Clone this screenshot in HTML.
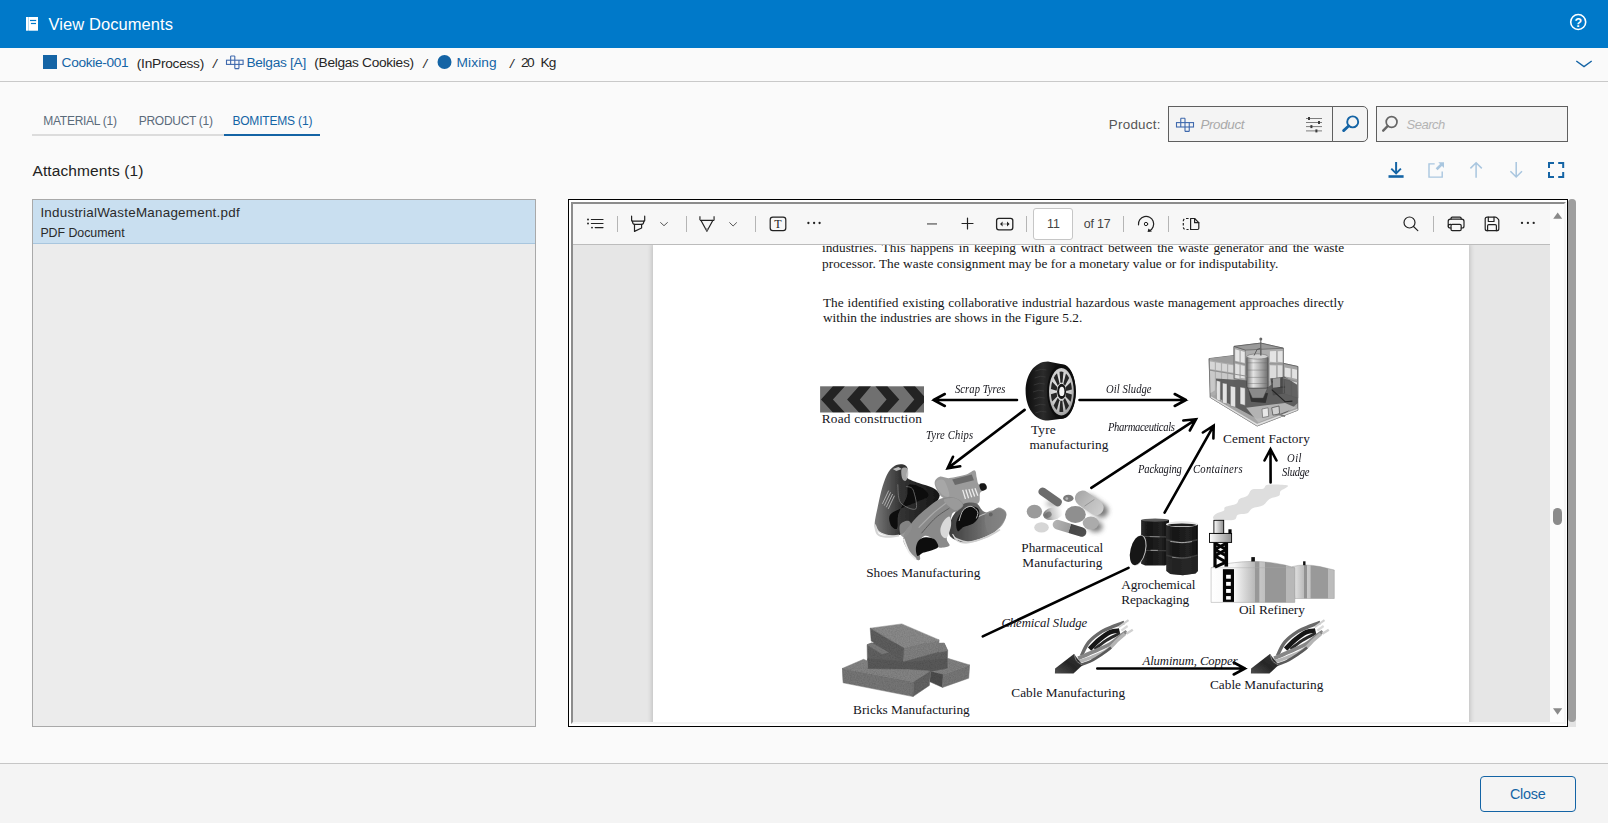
<!DOCTYPE html>
<html lang="en">
<head>
<meta charset="utf-8">
<title>View Documents</title>
<style>
*{box-sizing:border-box;margin:0;padding:0}
html,body{width:1608px;height:823px;overflow:hidden}
body{background:#fafafa;font-family:"Liberation Sans",sans-serif;color:#333;position:relative}
.a{position:absolute}
.t{position:absolute;white-space:nowrap;line-height:1}
.lnk{color:#1464a5}
svg{position:absolute;overflow:visible}
/* header */
#hdr{left:0;top:0;width:1608px;height:48px;background:#0079c9}
#crumb{left:0;top:48px;width:1608px;height:34px;background:#fafafa;border-bottom:1px solid #c9c9c9}
#foot{left:0;top:763px;width:1608px;height:60px;background:#f4f4f4;border-top:1px solid #c6c6c6}
#closeb{left:1480px;top:776px;width:96px;height:36px;border:1px solid #1464a5;border-radius:4px}
/* tabs */
#tabline{left:32px;top:134px;width:192px;height:2px;background:#dcdcdc}
#tabsel{left:224px;top:134px;width:96px;height:2px;background:#1464a5}
/* inputs */
#pin{left:1168px;top:106px;width:165px;height:36px;background:#f4f4f4;border:1px solid #5f5f5f}
#pbtn{left:1332px;top:106px;width:36px;height:36px;background:#f4f4f4;border:1px solid #5f5f5f;border-radius:0 5px 5px 0}
#sin{left:1376px;top:106px;width:192px;height:36px;background:#f4f4f4;border:1px solid #5f5f5f}
/* left list */
#list{left:32px;top:199px;width:504px;height:528px;background:#ececec;border:1px solid #a9a9a9}
#item{left:33px;top:200px;width:502px;height:44px;background:#c9dff0;border-bottom:1px solid #a8c6de}
/* pdf frame */
#pdf{left:568px;top:199px;width:1000px;height:528px;background:#fff;border:1px solid #000}
#pdfin{left:571px;top:202px;width:995px;height:522px;border-style:solid;border-width:2px;border-color:#8c8c8c #f4f4f4 #f4f4f4 #8c8c8c;background:#e6e6e6;overflow:hidden}
#page{left:653px;top:245px;width:816px;height:480px;background:#fff;box-shadow:0 0 5px 1px rgba(0,0,0,.18)}
#ptb{left:573px;top:204px;width:977px;height:41px;background:#f7f7f7;border-bottom:1px solid #bcbcbc}
#psb{left:1550px;top:204px;width:16px;height:520px;background:#fcfcfc}
#psbt{left:1553px;top:508px;width:9px;height:17px;border-radius:4.5px;background:#8b8b8b}
.sep{position:absolute;top:216px;width:1px;height:16px;background:#b5b5b5}
#pgin{left:1033px;top:208px;width:40px;height:32px;background:#fff;border:1px solid #c6c6c6;border-radius:3px}
#osb{left:1568px;top:199px;width:8px;height:528px;background:#e3e3e3;border-radius:4px 4px 0 0}
#osbt{left:1568px;top:199px;width:8px;height:523px;background:#9e9e9e;border-radius:4px}
</style>
</head>
<body>
<!-- HEADER -->
<header id="hdr" class="a"></header>
<nav id="crumb" class="a"></nav>
<footer id="foot" class="a"></footer>
<div id="closeb" class="a"></div>
<div id="tabline" class="a"></div>
<div id="tabsel" class="a"></div>
<div id="pin" class="a"></div>
<div id="pbtn" class="a"></div>
<div id="sin" class="a"></div>
<section id="list" class="a"></section>
<div id="item" class="a"></div>
<div id="osb" class="a"></div>
<div id="osbt" class="a"></div>
<section id="pdf" class="a"></section>
<div id="pdfin" class="a">
<div id="pg" class="a" style="left:-573px;top:-204px;width:1608px;height:823px">
<div id="page" class="a"></div>
<svg class="a" style="left:0;top:0" width="1608" height="823" viewBox="0 0 1608 823">
<defs>
<filter id="b1" x="-20%" y="-20%" width="140%" height="140%"><feGaussianBlur stdDeviation="0.6"/></filter>
<filter id="b2" x="-20%" y="-20%" width="140%" height="140%"><feGaussianBlur stdDeviation="1.2"/></filter>
<filter id="b3" x="-30%" y="-30%" width="160%" height="160%"><feGaussianBlur stdDeviation="2.5"/></filter>
<filter id="noise" x="0" y="0" width="100%" height="100%"><feTurbulence type="fractalNoise" baseFrequency="0.85" numOctaves="2" seed="3" result="n"/><feColorMatrix in="n" type="matrix" values="0 0 0 0 0.72  0 0 0 0 0.72  0 0 0 0 0.72  1.5 0 0 0 -0.45" result="g"/><feComposite in="g" in2="SourceGraphic" operator="in" result="gm"/><feBlend in="SourceGraphic" in2="gm" mode="multiply" result="m"/><feGaussianBlur in="m" stdDeviation="0.35"/></filter>
</defs>

<g id="arrows">
<path d="M1017.0 400.0L933.5 400.0M944.8 406.0L933.5 400.0L944.8 394.0" fill="none" stroke="#000" stroke-width="2.6" stroke-linecap="round" stroke-linejoin="miter"/>
<path d="M1024.6 409.9L947.6 468.4M960.2 466.3L947.6 468.4L953.0 456.8" fill="none" stroke="#000" stroke-width="2.6" stroke-linecap="round" stroke-linejoin="miter"/>
<path d="M1079.5 400.0L1186.0 400.0M1174.7 394.0L1186.0 400.0L1174.7 406.0" fill="none" stroke="#000" stroke-width="2.6" stroke-linecap="round" stroke-linejoin="miter"/>
<path d="M1091.3 487.8L1196.0 419.3M1183.3 420.5L1196.0 419.3L1189.8 430.5" fill="none" stroke="#000" stroke-width="2.6" stroke-linecap="round" stroke-linejoin="miter"/>
<path d="M1164.6 512.6L1213.7 425.6M1202.9 432.5L1213.7 425.6L1213.4 438.4" fill="none" stroke="#000" stroke-width="2.6" stroke-linecap="round" stroke-linejoin="miter"/>
<path d="M1270.6 482.5L1270.5 449.2M1264.5 460.5L1270.5 449.2L1276.5 460.5" fill="none" stroke="#000" stroke-width="2.6" stroke-linecap="round" stroke-linejoin="miter"/>
<path d="M1128.5 567.9L982.8 636.4" fill="none" stroke="#000" stroke-width="2.6" stroke-linecap="round" stroke-linejoin="miter"/>
<path d="M1097.3 668.5L1245.0 668.5M1233.7 662.5L1245.0 668.5L1233.7 674.5" fill="none" stroke="#000" stroke-width="2.6" stroke-linecap="round" stroke-linejoin="miter"/>
</g>
<g id="barrels" filter="url(#b1)">
<defs><linearGradient id="bg1" x1="0" x2="1"><stop offset="0" stop-color="#2e2e2e"/><stop offset=".25" stop-color="#141414"/><stop offset=".7" stop-color="#222"/><stop offset="1" stop-color="#0e0e0e"/></linearGradient></defs>
<path d="M1141.1 520.1L1169.0 520.1L1169.0 563.8L1165.0 565.6L1145.2 565.6L1141.1 563.8Z" fill="url(#bg1)" />
<ellipse cx="1155.1" cy="520.1" rx="13.9" ry="1.6" fill="#5a5a5a" />
<path d="M1141.6 536.3L1168.6 537.0" fill="none" stroke="#4d4d4d" stroke-width="1.0" />
<path d="M1149.7 536.6L1159.6 536.8" fill="none" stroke="#8a8a8a" stroke-width="0.9" />
<path d="M1141.6 550.3L1168.6 550.8" fill="none" stroke="#444" stroke-width="1.0" />
<path d="M1150.6 550.3L1157.8 550.4" fill="none" stroke="#a0a0a0" stroke-width="0.9" />
<path d="M1165.9 524.2L1197.9 524.2L1197.9 570.9L1195.5 573.6L1182.9 575.3L1170.4 574.1L1166.3 570.9Z" fill="url(#bg1)" />
<ellipse cx="1181.9" cy="524.2" rx="16.0" ry="2.9" fill="#e6e6e6" />
<ellipse cx="1181.9" cy="524.9" rx="14.2" ry="1.4" fill="#1a1a1a" />
<path d="M1166.3 539.7C1168.9 540.1 1176.6 542.6 1181.9 542.6C1187.1 542.6 1195.2 540.1 1197.9 539.7" fill="none" stroke="#3b3b3b" stroke-width="1.6" />
<path d="M1170.4 541.5C1172.3 541.6 1178.3 542.6 1181.9 542.6C1185.5 542.7 1190.3 541.8 1191.9 541.6" fill="none" stroke="#b5b5b5" stroke-width="0.9" />
<path d="M1166.3 555.2C1168.9 555.7 1176.6 558.2 1181.9 558.2C1187.1 558.2 1195.2 555.7 1197.9 555.2" fill="none" stroke="#3b3b3b" stroke-width="1.6" />
<path d="M1172.2 557.3C1173.8 557.4 1178.7 558.2 1181.9 558.2C1185.0 558.2 1189.5 557.4 1191.0 557.3" fill="none" stroke="#9a9a9a" stroke-width="0.8" />
<path d="M1166.8 558.4L1197.9 556.6L1197.9 570.9L1195.5 573.6L1182.9 575.3L1170.4 574.1L1166.6 570.9Z" fill="#2b2b2b" opacity="0.6" />
<ellipse cx="1138.3" cy="550.3" rx="7.6" ry="15.5" fill="#c4c4c4" transform="rotate(14 1138.3 550.3)" />
<ellipse cx="1137.7" cy="550.4" rx="7.2" ry="15.1" fill="#171717" transform="rotate(14 1137.7 550.4)" />
</g>
<g id="bricks" filter="url(#noise)">
<path d="M947.7 658.3L969.7 665.0L943.1 674.6L930.4 670.6L947.2 668.0Z" fill="#808080" stroke="#808080" stroke-width="0.5" />
<path d="M930.4 670.9L943.1 674.6L942.6 687.4L929.9 681.8Z" fill="#4c4c4c" stroke="#4c4c4c" stroke-width="0.5" />
<path d="M943.1 674.6L969.7 665.0L968.7 678.2L942.6 687.4Z" fill="#767676" stroke="#767676" stroke-width="0.5" />
<path d="M867.1 644.7L871.7 643.0L944.2 643.3L947.7 650.7L947.2 668.0L930.4 671.3L909.5 670.3L867.6 669.0Z" fill="#606060" stroke="#606060" stroke-width="0.5" />
<path d="M867.1 644.7L871.7 643.0L889.0 652.2L881.9 653.9Z" fill="#7a7a7a" stroke="#7a7a7a" stroke-width="0.5" />
<path d="M938.5 643.5L944.2 643.1L947.7 650.7L939.1 652.2Z" fill="#7e7e7e" stroke="#7e7e7e" stroke-width="0.5" />
<path d="M867.6 658.8L909.5 661.9L947.2 658.8L947.2 668.0L930.4 671.3L909.5 670.3L867.6 669.0Z" fill="#595959" stroke="#595959" stroke-width="0.5" />
<path d="M842.1 668.5L863.5 659.3L867.6 660.9L867.6 669.0L909.5 669.6L930.4 671.1L913.5 681.8Z" fill="#838383" stroke="#838383" stroke-width="0.5" />
<path d="M842.1 668.5L913.5 681.8L913.0 696.6L843.1 682.8Z" fill="#757575" stroke="#757575" stroke-width="0.5" />
<path d="M913.5 681.8L930.4 671.1L929.4 685.4L913.0 696.6Z" fill="#626262" stroke="#626262" stroke-width="0.5" />
<path d="M870.2 628.2L901.8 623.9L939.1 639.9L904.3 648.6Z" fill="#898989" stroke="#898989" stroke-width="0.5" />
<path d="M870.2 628.2L904.3 648.6L903.3 661.4L871.2 641.0Z" fill="#5d5d5d" stroke="#5d5d5d" stroke-width="0.5" />
<path d="M904.3 648.6L939.1 639.9L938.5 651.7L903.3 661.4Z" fill="#7f7f7f" stroke="#7f7f7f" stroke-width="0.5" />
</g>
<g id="cable1" filter="url(#b1)">
<defs><linearGradient id="cbs" x1="0" y1="1" x2="1" y2="0"><stop offset="0" stop-color="#4e4e4e"/><stop offset=".5" stop-color="#262626"/><stop offset="1" stop-color="#3a3a3a"/></linearGradient></defs>
<path d="M1081.4 655.8C1082.6 653.5 1085.4 646.2 1088.8 642.2C1092.2 638.1 1097.6 634.2 1102.0 631.4C1106.4 628.7 1111.5 627.2 1115.2 625.6C1119.0 624.1 1122.8 622.9 1124.3 622.3" fill="none" stroke="#6a6a6a" stroke-width="3.4" />
<path d="M1089.6 649.2C1091.1 647.7 1095.3 642.9 1098.7 640.1C1102.2 637.3 1106.8 633.8 1110.3 632.2C1113.7 630.7 1117.9 630.9 1119.4 630.6" fill="none" stroke="#161616" stroke-width="4.6" />
<path d="M1094.6 649.2C1096.5 647.7 1102.3 643.0 1106.2 640.5C1110.0 638.0 1115.5 635.6 1117.7 634.3C1120.0 633.0 1119.4 632.9 1119.8 632.7" fill="none" stroke="#2a2a2a" stroke-width="3.0" />
<path d="M1078.1 658.3C1080.8 657.1 1089.2 653.7 1094.6 651.3C1100.0 648.8 1106.2 646.2 1110.3 643.8C1114.4 641.4 1116.6 638.9 1119.4 636.8C1122.1 634.7 1125.6 632.3 1126.8 631.4" fill="none" stroke="#868686" stroke-width="3.8" />
<path d="M1076.8 662.4C1079.2 661.6 1086.4 659.4 1091.3 657.5C1096.2 655.5 1101.7 653.7 1106.2 650.8C1110.6 648.0 1114.6 642.9 1117.7 640.1C1120.8 637.3 1123.6 634.9 1124.8 633.9" fill="none" stroke="#b4b4b4" stroke-width="3.4" />
<path d="M1079.7 665.3C1081.6 664.5 1087.4 662.7 1091.3 660.8C1095.1 658.8 1099.5 655.9 1102.9 653.7C1106.2 651.5 1109.7 648.6 1111.1 647.5" fill="none" stroke="#5a5a5a" stroke-width="2.6" />
<path d="M1118.6 627.3L1128.5 620.1" fill="none" stroke="#cfcfcf" stroke-width="2.0" />
<path d="M1121.4 630.6L1127.6 626.0" fill="none" stroke="#dadada" stroke-width="2.2" />
<path d="M1126.4 633.7L1132.8 629.8" fill="none" stroke="#d0d0d0" stroke-width="2.4" />
<path d="M1054.9 673.6L1055.1 668.4L1073.9 654.0L1082.6 664.9L1073.5 673.6Z" fill="url(#cbs)" />
<path d="M1074.3 654.1C1074.7 655.3 1075.1 659.0 1076.4 660.8C1077.7 662.6 1081.2 664.2 1082.2 664.9" fill="none" stroke="#8a8a8a" stroke-width="0.9" />
</g>
<g id="cable2" transform="translate(196 0)" filter="url(#b1)">

<path d="M1081.4 655.8C1082.6 653.5 1085.4 646.2 1088.8 642.2C1092.2 638.1 1097.6 634.2 1102.0 631.4C1106.4 628.7 1111.5 627.2 1115.2 625.6C1119.0 624.1 1122.8 622.9 1124.3 622.3" fill="none" stroke="#6a6a6a" stroke-width="3.4" />
<path d="M1089.6 649.2C1091.1 647.7 1095.3 642.9 1098.7 640.1C1102.2 637.3 1106.8 633.8 1110.3 632.2C1113.7 630.7 1117.9 630.9 1119.4 630.6" fill="none" stroke="#161616" stroke-width="4.6" />
<path d="M1094.6 649.2C1096.5 647.7 1102.3 643.0 1106.2 640.5C1110.0 638.0 1115.5 635.6 1117.7 634.3C1120.0 633.0 1119.4 632.9 1119.8 632.7" fill="none" stroke="#2a2a2a" stroke-width="3.0" />
<path d="M1078.1 658.3C1080.8 657.1 1089.2 653.7 1094.6 651.3C1100.0 648.8 1106.2 646.2 1110.3 643.8C1114.4 641.4 1116.6 638.9 1119.4 636.8C1122.1 634.7 1125.6 632.3 1126.8 631.4" fill="none" stroke="#868686" stroke-width="3.8" />
<path d="M1076.8 662.4C1079.2 661.6 1086.4 659.4 1091.3 657.5C1096.2 655.5 1101.7 653.7 1106.2 650.8C1110.6 648.0 1114.6 642.9 1117.7 640.1C1120.8 637.3 1123.6 634.9 1124.8 633.9" fill="none" stroke="#b4b4b4" stroke-width="3.4" />
<path d="M1079.7 665.3C1081.6 664.5 1087.4 662.7 1091.3 660.8C1095.1 658.8 1099.5 655.9 1102.9 653.7C1106.2 651.5 1109.7 648.6 1111.1 647.5" fill="none" stroke="#5a5a5a" stroke-width="2.6" />
<path d="M1118.6 627.3L1128.5 620.1" fill="none" stroke="#cfcfcf" stroke-width="2.0" />
<path d="M1121.4 630.6L1127.6 626.0" fill="none" stroke="#dadada" stroke-width="2.2" />
<path d="M1126.4 633.7L1132.8 629.8" fill="none" stroke="#d0d0d0" stroke-width="2.4" />
<path d="M1054.9 673.6L1055.1 668.4L1073.9 654.0L1082.6 664.9L1073.5 673.6Z" fill="url(#cbs)" />
<path d="M1074.3 654.1C1074.7 655.3 1075.1 659.0 1076.4 660.8C1077.7 662.6 1081.2 664.2 1082.2 664.9" fill="none" stroke="#8a8a8a" stroke-width="0.9" />
</g>
<g id="cement">
<defs><linearGradient id="cyl" x1="0" x2="1"><stop offset="0" stop-color="#777"/><stop offset=".3" stop-color="#e4e4e4"/><stop offset=".55" stop-color="#bdbdbd"/><stop offset="1" stop-color="#6c6c6c"/></linearGradient></defs>
<path d="M1209.1 358.6L1234.0 355.5L1234.0 346.4L1260.8 343.1L1283.3 348.2L1283.3 363.4L1297.8 366.5L1297.8 410.2L1257.1 426.0L1210.3 397.5Z" fill="#a6a6a6" stroke="#555" stroke-width="0.8" />
<path d="M1209.1 358.6L1234.0 355.5L1246.8 358.6L1246.8 366.5L1215.8 361.8Z" fill="#9d9d9d" />
<path d="M1209.5 360.4L1246.8 366.5L1246.8 387.1L1210.3 396.2Z" fill="#aeaeae" />
<path d="M1210.0 361.4L1214.8 362.2L1214.8 369.8L1210.0 369.0Z" fill="#d6d6d6" />
<path d="M1210.0 370.8L1214.8 371.6L1214.8 390.6L1210.0 393.2Z" fill="#c9c9c9" />
<path d="M1216.0 362.4L1220.9 363.2L1220.9 370.8L1216.0 370.0Z" fill="#d6d6d6" />
<path d="M1216.0 371.8L1220.9 372.6L1220.9 390.4L1216.0 393.0Z" fill="#c9c9c9" />
<path d="M1222.1 363.4L1227.0 364.2L1227.0 371.8L1222.1 371.0Z" fill="#d6d6d6" />
<path d="M1222.1 372.8L1227.0 373.6L1227.0 390.2L1222.1 392.8Z" fill="#c9c9c9" />
<path d="M1228.2 364.4L1233.4 365.3L1233.4 372.8L1228.2 372.0Z" fill="#d6d6d6" />
<path d="M1228.2 373.8L1233.4 374.7L1233.4 389.9L1228.2 392.6Z" fill="#c9c9c9" />
<path d="M1234.0 346.4L1245.6 350.1L1245.6 381.1L1234.0 378.6Z" fill="#a9a9a9" stroke="#555" stroke-width="0.6" />
<path d="M1245.6 350.1L1283.3 348.2L1283.3 381.1L1245.6 381.1Z" fill="#adadad" />
<path d="M1234.0 346.4L1260.8 343.1L1283.3 348.2L1245.6 350.1Z" fill="#9a9a9a" stroke="#555" stroke-width="0.6" />
<path d="M1235.2 349.2L1239.5 350.5L1239.5 361.8L1235.2 360.7Z" fill="#e6e6e6" />
<path d="M1235.2 363.7L1239.5 364.8L1239.5 378.6L1235.2 378.0Z" fill="#e0e0e0" />
<path d="M1240.7 350.8L1244.7 352.0L1244.7 363.1L1240.7 362.1Z" fill="#e6e6e6" />
<path d="M1240.7 365.1L1244.7 366.1L1244.7 378.6L1240.7 378.0Z" fill="#e0e0e0" />
<path d="M1269.9 351.3L1276.0 350.9L1276.0 362.2L1269.9 361.8Z" fill="#e4e4e4" />
<path d="M1269.9 365.2L1276.0 365.5L1276.0 378.6L1269.9 378.0Z" fill="#dcdcdc" />
<path d="M1277.8 351.3L1282.7 350.9L1282.7 362.2L1277.8 361.8Z" fill="#e4e4e4" />
<path d="M1277.8 365.2L1282.7 365.5L1282.7 378.6L1277.8 378.0Z" fill="#dcdcdc" />
<path d="M1283.3 363.4L1297.8 366.5L1297.8 398.1L1283.3 393.2Z" fill="#a4a4a4" stroke="#555" stroke-width="0.6" />
<path d="M1284.8 367.4L1290.6 368.5L1290.6 377.6L1284.8 376.5Z" fill="#e2e2e2" />
<path d="M1284.8 380.2L1290.6 381.3L1290.6 395.4L1284.8 393.7Z" fill="#dadada" />
<path d="M1292.1 368.8L1297.0 369.8L1297.0 378.9L1292.1 378.0Z" fill="#e2e2e2" />
<path d="M1292.1 381.6L1297.0 382.6L1297.0 397.3L1292.1 395.9Z" fill="#dadada" />
<path d="M1215.8 378.6L1246.8 380.4L1268.1 387.1L1283.9 376.2L1297.2 384.7L1297.8 402.9L1285.1 413.9L1257.1 418.7L1218.2 398.1Z" fill="#585858" opacity="0.92" filter="url(#b1)"/>
<path d="M1216.4 380.4L1220.4 381.4L1220.4 401.1L1216.4 399.9Z" fill="#e2e2e2" stroke="#555" stroke-width="0.4" />
<path d="M1222.5 382.9L1227.0 383.8L1227.0 404.1L1222.5 402.9Z" fill="#e2e2e2" stroke="#555" stroke-width="0.4" />
<path d="M1230.4 385.9L1235.5 386.9L1235.5 407.2L1230.4 406.0Z" fill="#e2e2e2" stroke="#555" stroke-width="0.4" />
<path d="M1240.1 387.1L1245.2 388.1L1245.2 405.4L1240.1 404.1Z" fill="#e2e2e2" stroke="#555" stroke-width="0.4" />
<path d="M1248.6 390.8L1268.1 393.2L1265.6 402.9L1251.1 401.7Z" fill="#2e2e2e" opacity="0.9" />
<path d="M1270.5 378.6L1283.9 376.8L1285.1 393.2L1272.9 395.6Z" fill="#4a4a4a" opacity="0.9" />
<path d="M1271.7 389.6L1285.1 401.7L1292.4 401.1" fill="none" stroke="#222" stroke-width="1.1"/>
<path d="M1271.7 381.1L1277.8 387.1L1285.1 387.1" fill="none" stroke="#333" stroke-width="0.9"/>
<path d="M1272.9 378.6L1280.2 378.0L1280.2 387.1L1272.9 387.7Z" fill="#9c9c9c" />
<rect x="1246.8" y="356.1" width="21.3" height="32.2" rx="2" fill="url(#cyl)" stroke="#3c3c3c" stroke-width=".7"/>
<ellipse cx="1257.4" cy="356.5" rx="10.6" ry="2.6" fill="#d2d2d2" stroke="#666" stroke-width=".5"/>
<path d="M1254.1 355.5L1257.1 349.4L1260.8 348.2L1260.8 339.1" fill="none" stroke="#555" stroke-width="0.9"/>
<path d="M1260.8 355.5L1260.8 348.2" fill="none" stroke="#666" stroke-width="1.6"/>
<circle cx="1260.8" cy="339.1" r="1.5" fill="#666"/>
<path d="M1247.0 362.8L1267.8 362.8" fill="none" stroke="#666" stroke-width="0.5" opacity="0.8"/>
<path d="M1247.0 370.1L1267.8 370.1" fill="none" stroke="#666" stroke-width="0.5" opacity="0.8"/>
<path d="M1247.0 377.4L1267.8 377.4" fill="none" stroke="#666" stroke-width="0.5" opacity="0.8"/>
<path d="M1247.0 383.5L1267.8 383.5" fill="none" stroke="#666" stroke-width="0.5" opacity="0.8"/>
<path d="M1248.0 388.3L1267.5 388.3L1263.2 398.1L1252.3 398.1Z" fill="#8a8a8a" stroke="#444" stroke-width="0.5" />
<path d="M1210.3 395.6L1257.1 423.6L1297.8 408.4L1297.8 410.2L1257.1 426.0L1210.3 397.5Z" fill="#e3e3e3" stroke="#888" stroke-width="0.4" />
<path d="M1246.2 407.8L1285.1 402.9L1296.0 407.8L1258.3 422.4Z" fill="#bcbcbc" opacity="0.9" />
<path d="M1262.0 409.0L1268.1 407.8L1268.7 416.3L1262.6 417.5Z" fill="#e8e8e8" stroke="#444" stroke-width="0.5" />
<path d="M1271.7 407.8L1279.0 406.0L1279.6 413.9L1272.9 415.1Z" fill="#d0d0d0" stroke="#333" stroke-width="0.6" />
<path d="M1277.8 413.9L1285.1 416.3" fill="none" stroke="#777" stroke-width="1.6"/>
<path d="M1209.1 358.6L1210.3 397.5" fill="none" stroke="#777" stroke-width="0.6"/>
<path d="M1209.5 370.1L1246.8 376.2" fill="none" stroke="#8a8a8a" stroke-width="0.9"/>
<path d="M1283.3 348.2L1283.3 393.2" fill="none" stroke="#777" stroke-width="0.6"/>
<path d="M1283.3 378.0L1297.8 381.7" fill="none" stroke="#8a8a8a" stroke-width="0.9"/>
<path d="M1234.0 361.8L1245.6 364.6" fill="none" stroke="#8a8a8a" stroke-width="0.9"/>
<path d="M1268.7 363.8L1283.3 364.0" fill="none" stroke="#8a8a8a" stroke-width="0.9"/>
</g>
<g id="pills">
<defs><linearGradient id="pg4" x1="0" x2="1"><stop offset="0" stop-color="#6f6f6f"/><stop offset=".45" stop-color="#c9c9c9"/><stop offset="1" stop-color="#fff"/></linearGradient><linearGradient id="pg8" x1="0" x2="1"><stop offset="0" stop-color="#b4b4b4"/><stop offset=".5" stop-color="#9c9c9c"/><stop offset=".52" stop-color="#474747"/><stop offset="1" stop-color="#505050"/></linearGradient><linearGradient id="pg6" x1="0" x2="1"><stop offset="0" stop-color="#a6a6a6"/><stop offset=".5" stop-color="#bdbdbd"/><stop offset="1" stop-color="#cdcdcd"/></linearGradient></defs>
<g filter="url(#b3)" opacity=".75">
<rect x="1079.8" y="499.4" width="30.0" height="13.4" rx="6.7" fill="#4e4e4e" transform="rotate(35 1094.8 506.1)" />
<ellipse cx="1095.6" cy="526.6" rx="7.1" ry="5.5" fill="#555" />
<ellipse cx="1052.9" cy="503.7" rx="7.1" ry="3.2" fill="#999" />
</g>
<g filter="url(#b1)">
<rect x="1036.9" y="492.9" width="26.5" height="8.2" rx="4.1" fill="#6c6c6c" transform="rotate(35 1050.2 497.0)" />
<ellipse cx="1068.3" cy="498.3" rx="5.2" ry="3.6" fill="#7a7a7a" />
<ellipse cx="1066.8" cy="498.6" rx="1.4" ry="1.3" fill="#b5b5b5" />
<ellipse cx="1034.4" cy="511.6" rx="7.7" ry="6.8" fill="#9b9b9b" />
<ellipse cx="1052.9" cy="513.6" rx="9.9" ry="6.3" fill="url(#pg4)" transform="rotate(-12 1052.9 513.6)" />
<ellipse cx="1048.2" cy="514.8" rx="3.6" ry="2.8" fill="#6a6a6a" transform="rotate(-30 1048.2 514.8)" opacity="0.7" />
<rect x="1073.5" y="495.2" width="31.6" height="15.4" rx="7.7" fill="url(#pg6)" transform="rotate(35 1089.3 502.9)" />
<path d="M1084.5 506.1L1094.4 499.4" fill="none" stroke="#8a8a8a" stroke-width="0.8" />
<ellipse cx="1090.8" cy="523.1" rx="8.1" ry="6.5" fill="#ababab" />
<ellipse cx="1075.4" cy="514.4" rx="10.4" ry="8.5" fill="#8f8f8f" />
<ellipse cx="1041.5" cy="527.4" rx="7.3" ry="5.2" fill="#d6d6d6" />
<rect x="1052.1" y="523.5" width="34.8" height="9.6" rx="4.8" fill="url(#pg8)" transform="rotate(17 1069.5 528.4)" />
</g>
</g>
<g id="refinery">
<defs><linearGradient id="rt1" x1="0" x2="1"><stop offset="0" stop-color="#fff"/><stop offset=".28" stop-color="#f6f6f6"/><stop offset=".42" stop-color="#d2d2d2"/><stop offset=".52" stop-color="#b9b9b9"/><stop offset=".525" stop-color="#989898"/><stop offset=".575" stop-color="#989898"/><stop offset=".58" stop-color="#c6c6c6"/><stop offset=".64" stop-color="#c0c0c0"/><stop offset=".645" stop-color="#979797"/><stop offset=".895" stop-color="#979797"/><stop offset=".9" stop-color="#b8b8b8"/><stop offset="1" stop-color="#b8b8b8"/></linearGradient><linearGradient id="rt2" x1="0" x2="1"><stop offset="0" stop-color="#e9e9e9"/><stop offset=".27" stop-color="#bcbcbc"/><stop offset=".275" stop-color="#929292"/><stop offset=".35" stop-color="#929292"/><stop offset=".355" stop-color="#c9c9c9"/><stop offset=".43" stop-color="#c4c4c4"/><stop offset=".435" stop-color="#999"/><stop offset=".84" stop-color="#999"/><stop offset=".845" stop-color="#bcbcbc"/><stop offset="1" stop-color="#bcbcbc"/></linearGradient><linearGradient id="rch" x1="0" x2="1"><stop offset="0" stop-color="#fff"/><stop offset="1" stop-color="#8c8c8c"/></linearGradient></defs>
<path d="M1213.4 518.7C1212.1 517.6 1214.1 515.3 1215.8 514.0C1217.5 512.6 1222.1 512.0 1223.7 510.8C1225.3 509.6 1223.2 508.0 1225.3 506.9C1227.4 505.7 1234.0 505.0 1236.3 503.7C1238.7 502.4 1237.6 500.3 1239.5 499.0C1241.3 497.6 1245.3 497.4 1247.4 495.8C1249.5 494.2 1249.5 490.7 1252.1 489.5C1254.8 488.3 1260.5 489.5 1263.2 488.7C1265.8 487.9 1263.8 485.3 1267.9 484.7C1272.0 484.2 1285.6 484.5 1287.7 485.5C1289.8 486.6 1282.0 489.3 1280.6 491.1C1279.1 492.8 1280.8 494.5 1279.0 495.8C1277.1 497.1 1272.1 497.4 1269.5 499.0C1266.9 500.5 1266.1 503.7 1263.2 505.3C1260.3 506.9 1254.8 507.1 1252.1 508.4C1249.5 509.7 1249.8 512.1 1247.4 513.2C1245.0 514.2 1240.0 513.7 1237.9 514.7C1235.8 515.8 1237.1 518.6 1234.7 519.5C1232.4 520.4 1227.2 520.4 1223.7 520.3C1220.1 520.1 1214.7 519.8 1213.4 518.7Z" fill="#dedede" />
<path d="M1294.8 598.5L1334.3 598.5L1334.3 570.0L1320.0 566.6Q1304.2 563.4 1292.4 566.6Z" fill="url(#rt2)" stroke="#8a8a8a" stroke-width=".4"/>
<rect x="1303.1" y="561.3" width="2.4" height="3.9" fill="#111" />
<path d="M1211.1 602.4L1294.8 602.4L1294.8 567.7Q1275.8 561.8 1253.7 561.3Q1228.4 561.8 1211.1 567.7Z" fill="url(#rt1)" stroke="#8a8a8a" stroke-width=".4"/>
<path d="M1211.1 567.7L1294.8 567.7" fill="none" stroke="#aaa" stroke-width="0.4" />
<rect x="1251.3" y="557.1" width="3.6" height="4.4" fill="#111" />
<rect x="1222.9" y="569.2" width="11.1" height="32.7" fill="#050505" />
<rect x="1226.1" y="574.8" width="4.7" height="3.9" fill="#fff" />
<rect x="1226.1" y="581.9" width="4.7" height="3.9" fill="#fff" />
<rect x="1226.1" y="589.0" width="4.7" height="3.9" fill="#fff" />
<rect x="1226.1" y="596.1" width="4.7" height="3.5" fill="#fff" />
<rect x="1213.4" y="542.4" width="3.2" height="24.8" fill="#050505" />
<rect x="1224.5" y="542.4" width="3.6" height="24.2" fill="#050505" />
<path d="M1215.0 543.2L1226.1 549.5L1215.0 555.8L1226.1 562.1L1215.0 567.2" fill="none" stroke="#050505" stroke-width="3.0" stroke-linejoin="bevel"/>
<path d="M1226.1 543.2L1215.0 549.5L1226.1 555.8" fill="none" stroke="#050505" stroke-width="2.8" stroke-linejoin="bevel"/>
<rect x="1209.5" y="533.4" width="22.1" height="9.0" fill="url(#rch)" stroke="#000" stroke-width="0.9" />
<rect x="1213.9" y="520.3" width="9.8" height="13.1" fill="url(#rch)" stroke="#000" stroke-width="0.9" />
<rect x="1228.4" y="529.3" width="3.2" height="4.4" fill="#050505" />
</g>
<g id="road">
<clipPath id="rc"><rect x="820.1" y="386.3" width="103.9" height="26.2"/></clipPath>
<rect x="820.1" y="386.3" width="103.9" height="26.2" fill="#707070"/>
<g clip-path="url(#rc)" fill="#232323">
<path d="M832.9 386.3L821 399.4L832.9 412.5H844.9L832.9 399.4L844.9 386.3Z"/>
<path d="M859 386.3L847.1 399.4L859 412.5H871L859.8 399.4L871 386.3Z"/>
<path d="M875.4 386.3L886.6 399.4L875.4 412.5H887.4L899.3 399.4L887.4 386.3Z"/>
<path d="M903.1 386.3L914.3 399.4L903.1 412.5H915L926.9 399.4L915 386.3Z"/>
</g>
</g>

<g id="shoes" filter="url(#b1)">
<defs><linearGradient id="sh4" x1="0" x2="1"><stop offset="0" stop-color="#3c3c3c"/><stop offset=".5" stop-color="#666"/><stop offset="1" stop-color="#9c9c9c"/></linearGradient><linearGradient id="sh1" x1="0" x2="1"><stop offset="0" stop-color="#7a7a7a"/><stop offset=".4" stop-color="#333"/><stop offset="1" stop-color="#151515"/></linearGradient></defs>
<path d="M874.7 524.9C874.6 521.0 876.2 514.4 877.5 508.1C878.8 501.8 880.5 493.2 882.4 487.1C884.2 481.1 886.3 475.5 888.7 471.8C891.0 468.1 893.9 466.3 896.3 465.1C898.8 463.9 901.5 464.0 903.3 464.5C905.2 465.0 906.9 466.1 907.5 468.3C908.1 470.4 905.0 474.9 906.8 477.4C908.7 479.8 914.4 481.2 918.7 483.0C923.0 484.7 929.2 485.9 932.7 487.8C936.2 489.8 939.2 492.2 939.7 494.8C940.1 497.5 937.3 501.2 935.5 503.9C933.6 506.6 931.3 508.3 928.5 510.9C925.7 513.5 922.1 516.5 918.7 519.3C915.3 522.1 910.8 525.3 908.2 527.7C905.7 530.0 905.5 531.9 903.3 533.3C901.1 534.7 898.0 535.8 894.9 536.1C891.9 536.3 888.0 535.5 885.2 534.7C882.4 533.8 879.9 532.8 878.2 531.2C876.4 529.5 874.8 528.7 874.7 524.9Z" fill="url(#sh1)" />
<path d="M890.0 515.1C891.9 512.2 897.2 510.4 901.9 508.1C906.7 505.8 914.3 503.2 918.7 501.1C923.1 499.0 928.0 497.7 928.5 495.5C928.9 493.3 924.8 489.6 921.5 487.8C918.2 486.1 911.4 483.5 908.9 485.0C906.5 486.6 908.6 492.2 906.8 496.9C905.1 501.7 900.1 508.5 898.4 513.7C896.8 518.9 898.3 526.4 897.0 528.4C895.8 530.4 892.2 527.8 891.0 525.6C889.9 523.4 888.2 518.0 890.0 515.1Z" fill="#080808" />
<path d="M882.4 503.9L888.7 490.6" fill="none" stroke="#b8b8b8" stroke-width="0.9" />
<path d="M884.3 505.6L890.6 492.3" fill="none" stroke="#b8b8b8" stroke-width="0.9" />
<path d="M886.3 507.3L892.6 494.0" fill="none" stroke="#b8b8b8" stroke-width="0.9" />
<path d="M888.2 508.9L894.5 495.7" fill="none" stroke="#b8b8b8" stroke-width="0.9" />
<path d="M897.7 484.4C898.2 487.4 897.5 498.4 900.5 502.5C903.6 506.6 913.8 510.9 915.9 508.8C918.0 506.7 914.7 493.7 913.1 489.9C911.5 486.2 907.3 487.0 906.1 486.4" fill="none" stroke="#7a7a7a" stroke-width="0.8" />
<path d="M875.1 524.9C875.7 526.0 876.7 529.8 878.4 531.5C880.2 533.1 882.7 534.1 885.4 534.9C888.2 535.8 893.4 536.1 894.9 536.3" fill="none" stroke="#e2e2e2" stroke-width="1.3" />
<path d="M892.8 469.0L898.4 466.9L901.9 469.0L896.3 471.1Z" fill="#ddd" opacity="0.8" />
<path d="M934.8 481.6C935.4 479.6 937.2 477.2 939.7 476.7C942.1 476.1 945.0 478.4 949.4 478.1C953.9 477.7 962.0 475.8 966.2 474.6C970.4 473.3 972.9 469.9 974.6 470.4C976.4 470.8 976.0 475.0 976.7 477.4C977.4 479.7 977.3 483.1 978.8 484.4C980.3 485.6 984.5 484.2 985.8 485.0C987.1 485.9 987.4 488.0 986.5 489.2C985.6 490.5 981.5 490.5 980.2 492.7C978.9 494.9 980.9 500.1 978.8 502.5C976.7 505.0 971.1 507.3 967.6 507.4C964.1 507.5 960.9 504.5 957.8 503.2C954.8 501.9 952.1 500.8 949.4 499.7C946.8 498.7 944.0 498.8 941.8 496.9C939.5 495.1 937.3 491.1 936.2 488.5C935.0 486.0 934.2 483.5 934.8 481.6Z" fill="#9b9b9b" />
<path d="M952.2 479.5L971.8 474.6L973.9 480.2L955.0 485.0Z" fill="#6a6a6a" />
<path d="M962.7 489.9L965.5 499.0" fill="none" stroke="#ececec" stroke-width="1.3" />
<path d="M965.8 489.5L968.6 498.2" fill="none" stroke="#ececec" stroke-width="1.3" />
<path d="M968.9 489.1L971.7 497.3" fill="none" stroke="#ececec" stroke-width="1.3" />
<path d="M971.9 488.7L974.7 496.5" fill="none" stroke="#ececec" stroke-width="1.3" />
<path d="M975.0 488.3L977.8 495.7" fill="none" stroke="#ececec" stroke-width="1.3" />
<path d="M979.5 484.4C980.1 483.2 983.9 483.0 985.1 483.7C986.3 484.4 987.1 487.4 986.5 488.5C985.9 489.7 982.8 491.3 981.6 490.6C980.4 489.9 978.9 485.5 979.5 484.4Z" fill="#151515" />
<path d="M935.5 483.0C935.7 480.5 941.5 478.1 943.9 480.2C946.2 482.3 949.7 493.1 949.4 495.5C949.2 498.0 944.8 496.9 942.5 494.8C940.1 492.7 935.2 485.4 935.5 483.0Z" fill="#a8a8a8" opacity="0.9" />
<path d="M949.4 534.7C948.3 531.3 949.7 524.6 950.8 520.7C952.0 516.7 954.3 513.7 956.4 510.9C958.5 508.1 960.2 505.2 963.4 503.9C966.7 502.6 972.7 502.1 976.0 503.2C979.3 504.4 980.7 509.4 983.0 510.9C985.3 512.4 987.4 512.9 990.0 512.3C992.5 511.7 995.8 507.6 998.4 507.4C1000.9 507.2 1004.1 509.4 1005.4 510.9C1006.6 512.4 1006.8 514.2 1006.1 516.5C1005.4 518.8 1003.4 522.1 1001.2 524.9C998.9 527.7 996.3 530.9 992.8 533.3C989.3 535.6 984.6 537.3 980.2 538.9C975.8 540.4 969.9 542.0 966.2 542.4C962.5 542.7 960.6 542.2 957.8 541.0C955.0 539.7 950.6 538.0 949.4 534.7Z" fill="url(#sh4)" />
<path d="M956.4 522.1C957.1 518.8 959.7 514.2 962.0 511.6C964.4 509.0 967.7 506.9 970.4 506.4C973.1 506.0 976.7 507.1 978.1 508.8C979.5 510.5 979.6 514.0 978.8 516.5C978.0 518.9 975.8 521.7 973.2 523.5C970.6 525.2 966.0 525.7 963.4 527.0C960.9 528.3 959.0 532.0 957.8 531.2C956.7 530.4 955.7 525.3 956.4 522.1Z" fill="#0a0a0a" />
<path d="M952.5 534.0C953.4 535.2 955.5 539.7 957.8 541.2C960.2 542.7 962.7 543.4 966.5 543.1C970.3 542.7 976.1 541.0 980.5 539.4C984.9 537.9 990.7 534.6 992.8 533.7" fill="none" stroke="#d8d8d8" stroke-width="1.2" />
<path d="M978.8 516.5C980.0 516.0 983.7 513.9 985.8 513.7C987.9 513.5 990.4 514.9 991.4 515.1" fill="none" stroke="#cfcfcf" stroke-width="0.9" />
<ellipse cx="990.7" cy="514.4" rx="2.0" ry="2.0" fill="#111" />
<path d="M903.3 538.9C903.6 536.5 904.0 534.0 906.1 530.5C908.2 527.0 912.4 521.6 915.9 517.9C919.4 514.2 923.4 511.1 927.1 508.1C930.8 505.1 934.5 501.6 938.3 499.7C942.0 497.9 946.0 496.9 949.4 496.9C952.9 496.9 956.9 498.3 959.2 499.7C961.6 501.1 963.7 503.5 963.4 505.3C963.2 507.2 959.7 509.5 957.8 510.9C956.0 512.3 953.6 510.9 952.2 513.7C950.8 516.5 950.4 523.5 949.4 527.7C948.5 531.9 946.7 535.8 946.7 538.9C946.7 541.9 950.8 544.4 949.4 545.8C948.1 547.2 941.1 548.4 938.3 547.2C935.5 546.1 935.0 540.7 932.7 538.9C930.3 537.0 926.6 535.1 924.3 536.1C922.0 537.0 919.4 540.6 918.7 544.4C918.0 548.3 920.7 556.8 920.1 559.1C919.5 561.5 917.1 559.7 915.2 558.4C913.3 557.1 910.7 553.8 908.9 551.4C907.2 549.1 905.7 546.5 904.7 544.4C903.8 542.4 903.1 541.2 903.3 538.9Z" fill="#8a8a8a" />
<path d="M915.9 547.9C916.1 545.4 917.1 542.3 918.7 540.5C920.3 538.7 923.1 537.4 925.7 537.2C928.3 536.9 932.0 537.6 934.1 539.1C936.2 540.7 938.5 544.7 938.3 546.5C938.0 548.4 935.2 549.0 932.7 550.0C930.1 551.1 925.4 551.9 922.9 552.8C920.4 553.8 918.7 556.7 917.6 555.9C916.4 555.1 915.7 550.5 915.9 547.9Z" fill="#0e0e0e" />
<path d="M903.6 538.9C904.5 541.0 906.9 548.3 908.9 551.7C911.0 555.1 914.7 557.9 915.9 559.1" fill="none" stroke="#ececec" stroke-width="1.8" />
<path d="M940.4 529.1C940.7 526.5 942.3 522.8 943.9 520.7C945.4 518.6 948.2 515.8 949.4 516.5C950.7 517.2 951.5 521.4 951.1 524.9C950.7 528.4 948.4 535.6 946.9 537.5C945.4 539.3 943.1 537.5 942.0 536.1C940.9 534.7 940.1 531.6 940.4 529.1Z" fill="#d9d9d9" />
<path d="M918.7 527.7C921.0 525.3 928.0 517.9 932.7 513.7C937.3 509.5 944.3 504.4 946.7 502.5" fill="none" stroke="#a9a9a9" stroke-width="1.2" />
<path d="M921.5 533.3C923.8 530.7 930.8 522.1 935.5 517.9C940.1 513.7 947.1 509.7 949.4 508.1" fill="none" stroke="#5a5a5a" stroke-width="1.0" />
<path d="M943.9 499.7C944.8 498.3 951.9 497.5 955.0 498.3C958.2 499.1 962.5 502.6 962.7 504.6C963.0 506.6 958.6 509.9 956.4 510.2C954.2 510.6 951.5 508.5 949.4 506.7C947.4 505.0 942.9 501.1 943.9 499.7Z" fill="#9a9a9a" />
<path d="M874.9 524.8C875.4 526.3 875.9 531.9 877.6 533.9C879.4 535.9 881.8 536.5 885.4 536.8C888.9 537.1 896.7 535.7 899.0 535.5" fill="none" stroke="#d4d4d4" stroke-width="2.0" />
<path d="M901.7 469.0C902.5 467.3 906.3 467.2 907.4 468.4C908.5 469.6 908.4 473.9 908.1 476.0C907.7 478.1 906.4 480.6 905.4 481.0C904.4 481.3 902.7 480.0 902.1 478.0C901.4 476.0 900.8 470.6 901.7 469.0Z" fill="#b9b9b9" opacity="0.85" />
<path d="M900.1 524.8C901.3 522.4 906.1 520.3 908.1 520.8C910.1 521.2 912.4 524.8 912.1 527.4C911.7 530.1 908.0 535.6 906.1 536.8C904.2 538.0 901.7 536.8 900.7 534.8C899.7 532.8 898.8 527.1 900.1 524.8Z" fill="#8d8d8d" opacity="0.9" />
<path d="M954.7 538.1C956.9 538.8 962.9 542.2 968.1 542.1C973.2 542.1 980.1 539.7 985.4 537.6C990.8 535.5 997.7 530.9 1000.1 529.6" fill="none" stroke="#cfcfcf" stroke-width="1.6" />
<path d="M959.0 521.0C959.7 519.3 961.0 512.8 963.0 510.4C965.0 507.9 968.6 506.1 971.0 506.3C973.5 506.6 976.8 509.7 977.7 511.7C978.6 513.7 976.6 517.3 976.3 518.4" fill="none" stroke="#bdbdbd" stroke-width="1.0" />
<path d="M985.4 514.1C987.2 510.2 995.5 509.8 998.8 509.4C1002.1 509.1 1004.0 510.6 1005.2 512.1C1006.4 513.5 1006.6 515.5 1005.7 518.1C1004.9 520.7 1003.1 525.0 1000.1 527.4C997.2 529.9 990.5 535.0 988.1 532.8C985.7 530.6 983.6 518.0 985.4 514.1Z" fill="#7d7d7d" opacity="0.75" />
</g>
<g id="tyre">
<defs><linearGradient id="tg" x1="0" x2="1"><stop offset="0" stop-color="#0c0c0c"/><stop offset=".35" stop-color="#2b2b2b"/><stop offset=".6" stop-color="#111"/><stop offset="1" stop-color="#0a0a0a"/></linearGradient><radialGradient id="rg" cx=".45" cy=".4" r=".7"><stop offset="0" stop-color="#f4f4f4"/><stop offset=".6" stop-color="#c9c9c9"/><stop offset="1" stop-color="#8a8a8a"/></radialGradient></defs>
<path d="M1048 361.4C1034 361.4 1025.6 375 1025.6 391C1025.6 407 1034 420.6 1048 420.6L1062 418.8C1070 418.8 1075.9 406 1075.9 391.6C1075.9 377 1070 364.2 1062 364.2Z" fill="url(#tg)"/>
<path d="M1035.4 371.0q6 -3 11 -1" stroke="#3d3d3d" stroke-width=".7" fill="none"/>
<path d="M1034.6 378.0q6 -3 11 -1" stroke="#3d3d3d" stroke-width=".7" fill="none"/>
<path d="M1033.8 385.0q6 -3 11 -1" stroke="#3d3d3d" stroke-width=".7" fill="none"/>
<path d="M1033.0 392.0q6 -3 11 -1" stroke="#3d3d3d" stroke-width=".7" fill="none"/>
<path d="M1033.8 399.0q6 -3 11 -1" stroke="#3d3d3d" stroke-width=".7" fill="none"/>
<path d="M1034.6 406.0q6 -3 11 -1" stroke="#3d3d3d" stroke-width=".7" fill="none"/>
<path d="M1035.4 413.0q6 -3 11 -1" stroke="#3d3d3d" stroke-width=".7" fill="none"/>
<ellipse cx="1061.4" cy="391.6" rx="14.3" ry="27.2" fill="#0d0d0d"/>
<ellipse cx="1061.4" cy="391.8" rx="12.4" ry="23.8" fill="url(#rg)"/>
<g transform="translate(1061.4 391.8) scale(0.5210 1)" fill="#262626">
<path d="M9.15 0.96L20.12 2.73A20.3 20.3 0 0 1 17.71 9.93L7.89 4.74Z"/>
<path d="M6.84 6.16L14.67 14.03A20.3 20.3 0 0 1 8.49 18.44L3.59 8.47Z"/>
<path d="M1.91 9.00L3.62 19.97A20.3 20.3 0 0 1 -3.97 19.91L-2.07 8.96Z"/>
<path d="M-3.74 8.40L-8.81 18.29A20.3 20.3 0 0 1 -14.91 13.77L-6.94 6.04Z"/>
<path d="M-7.97 4.60L-17.88 9.62A20.3 20.3 0 0 1 -20.16 2.38L-9.16 0.80Z"/>
<path d="M-9.15 -0.96L-20.12 -2.73A20.3 20.3 0 0 1 -17.71 -9.93L-7.89 -4.74Z"/>
<path d="M-6.84 -6.16L-14.67 -14.03A20.3 20.3 0 0 1 -8.49 -18.44L-3.59 -8.47Z"/>
<path d="M-1.91 -9.00L-3.62 -19.97A20.3 20.3 0 0 1 3.97 -19.91L2.07 -8.96Z"/>
<path d="M3.74 -8.40L8.81 -18.29A20.3 20.3 0 0 1 14.91 -13.77L6.94 -6.04Z"/>
<path d="M7.97 -4.60L17.88 -9.62A20.3 20.3 0 0 1 20.16 -2.38L9.16 -0.80Z"/>
</g>
<ellipse cx="1061.6" cy="391.4" rx="4.5" ry="7.6" fill="#161616"/>
<ellipse cx="1061.8" cy="391.4" rx="2.6" ry="4.7" fill="#f4f4f4"/>
</g>
</svg>
<div class="t" style="left:822.0px;top:241px;word-spacing:1.571px;color:#161616;font-size:13.3px;font-family:'Liberation Serif',serif;">industries. This happens in keeping with a contract between the waste generator and the waste</div>
<div class="t" style="left:822.0px;top:257px;letter-spacing:0.03px;color:#161616;font-size:13.3px;font-family:'Liberation Serif',serif;">processor. The waste consignment may be for a monetary value or for indisputability.</div>
<div class="t" style="left:823.0px;top:296px;word-spacing:0.556px;color:#161616;font-size:13.3px;font-family:'Liberation Serif',serif;">The identified existing collaborative industrial hazardous waste management approaches directly</div>
<div class="t" style="left:823.0px;top:311px;letter-spacing:0.0px;color:#161616;font-size:13.3px;font-family:'Liberation Serif',serif;">within the industries are shows in the Figure 5.2.</div>
<div class="t" style="left:821.8px;top:412px;letter-spacing:0.188px;color:#15151c;font-size:13.3px;font-family:'Liberation Serif',serif;">Road construction</div>
<div class="t" style="left:955.2px;top:383px;letter-spacing:0.057px;color:#15151c;font-size:12.2px;font-family:'Liberation Serif',serif;font-style:italic;transform:scaleX(0.87);transform-origin:0 0;">Scrap Tyres</div>
<div class="t" style="left:925.9px;top:429px;letter-spacing:0.192px;color:#15151c;font-size:12.2px;font-family:'Liberation Serif',serif;font-style:italic;transform:scaleX(0.87);transform-origin:0 0;">Tyre Chips</div>
<div class="t" style="left:1031.0px;top:423px;letter-spacing:0.167px;color:#15151c;font-size:13.3px;font-family:'Liberation Serif',serif;">Tyre</div>
<div class="t" style="left:1029.4px;top:438px;letter-spacing:0.125px;color:#15151c;font-size:13.3px;font-family:'Liberation Serif',serif;">manufacturing</div>
<div class="t" style="left:1106.0px;top:383px;letter-spacing:0.064px;color:#15151c;font-size:12.2px;font-family:'Liberation Serif',serif;font-style:italic;transform:scaleX(0.87);transform-origin:0 0;">Oil Sludge</div>
<div class="t" style="left:1107.6px;top:421px;letter-spacing:-0.411px;color:#15151c;font-size:12.2px;font-family:'Liberation Serif',serif;font-style:italic;transform:scaleX(0.87);transform-origin:0 0;">Pharmaceuticals</div>
<div class="t" style="left:1138.0px;top:463px;letter-spacing:-0.216px;color:#15151c;font-size:12.2px;font-family:'Liberation Serif',serif;font-style:italic;transform:scaleX(0.87);transform-origin:0 0;">Packaging</div>
<div class="t" style="left:1192.7px;top:463px;letter-spacing:0.319px;color:#15151c;font-size:12.2px;font-family:'Liberation Serif',serif;font-style:italic;transform:scaleX(0.87);transform-origin:0 0;">Containers</div>
<div class="t" style="left:1223.0px;top:432px;letter-spacing:0.115px;color:#15151c;font-size:13.3px;font-family:'Liberation Serif',serif;">Cement Factory</div>
<div class="t" style="left:1287.2px;top:452px;letter-spacing:0.575px;color:#15151c;font-size:12.2px;font-family:'Liberation Serif',serif;font-style:italic;transform:scaleX(0.87);transform-origin:0 0;">Oil</div>
<div class="t" style="left:1281.6px;top:466px;letter-spacing:-0.345px;color:#15151c;font-size:12.2px;font-family:'Liberation Serif',serif;font-style:italic;transform:scaleX(0.87);transform-origin:0 0;">Sludge</div>
<div class="t" style="left:866.2px;top:566px;letter-spacing:-0.0px;color:#15151c;font-size:13.3px;font-family:'Liberation Serif',serif;">Shoes Manufacturing</div>
<div class="t" style="left:1021.3px;top:541px;letter-spacing:0.0px;color:#15151c;font-size:13.3px;font-family:'Liberation Serif',serif;">Pharmaceutical</div>
<div class="t" style="left:1022.3px;top:556px;letter-spacing:0.083px;color:#15151c;font-size:13.3px;font-family:'Liberation Serif',serif;">Manufacturing</div>
<div class="t" style="left:1121.2px;top:578px;letter-spacing:-0.091px;color:#15151c;font-size:13.3px;font-family:'Liberation Serif',serif;">Agrochemical</div>
<div class="t" style="left:1121.2px;top:593px;letter-spacing:-0.15px;color:#15151c;font-size:13.3px;font-family:'Liberation Serif',serif;">Repackaging</div>
<div class="t" style="left:1239.0px;top:603px;letter-spacing:-0.091px;color:#15151c;font-size:13.3px;font-family:'Liberation Serif',serif;">Oil Refinery</div>
<div class="t" style="left:1001.4px;top:617px;letter-spacing:-0.036px;color:#15151c;font-size:12.7px;font-family:'Liberation Serif',serif;font-style:italic;">Chemical Sludge</div>
<div class="t" style="left:1142.5px;top:655px;letter-spacing:-0.1px;color:#15151c;font-size:12.7px;font-family:'Liberation Serif',serif;font-style:italic;">Aluminum, Copper</div>
<div class="t" style="left:1011.3px;top:686px;letter-spacing:0.028px;color:#15151c;font-size:13.3px;font-family:'Liberation Serif',serif;">Cable Manufacturing</div>
<div class="t" style="left:1210.0px;top:678px;letter-spacing:0.0px;color:#15151c;font-size:13.3px;font-family:'Liberation Serif',serif;">Cable Manufacturing</div>
<div class="t" style="left:853.1px;top:703px;letter-spacing:-0.026px;color:#15151c;font-size:13.3px;font-family:'Liberation Serif',serif;">Bricks Manufacturing</div>

<div id="ptb" class="a"></div>
<div id="psb" class="a"></div>
<div id="psbt" class="a"></div>
<div class="sep" style="left:617px"></div>
<div class="sep" style="left:686px"></div>
<div class="sep" style="left:755px"></div>
<div class="sep" style="left:1026px"></div>
<div class="sep" style="left:1123px"></div>
<div class="sep" style="left:1168px"></div>
<div class="sep" style="left:1433px"></div>
<div id="pgin" class="a"></div>
<svg class="a" style="left:0;top:0" width="1608" height="823" viewBox="0 0 1608 823">
<g fill="none" stroke="#222" stroke-width="1.2" stroke-linecap="round" stroke-linejoin="round">
<!-- list -->
<path d="M591.4 219.5H603M591.4 223.5H603M595.2 227.6H603"/>
<!-- highlighter -->
<path d="M631.6 216.2V220.6Q631.6 221.2 632.2 221.2H644.1Q644.7 221.2 644.7 220.6V216.2"/>
<path d="M632.5 221.2Q632.5 224.3 634.6 224.3H641.6Q643.8 224.3 643.8 221.2"/>
<path d="M634.5 224.3V231.4L641.6 228V224.3"/>
<!-- pen -->
<path d="M700.4 220.4H713.8"/>
<path d="M701 220.5L706.9 231.3L712.8 220.5"/>
<!-- T box -->
<rect x="770.2" y="217.1" width="15.6" height="13.5" rx="2.6"/>
<!-- plus -->
<path d="M962 223.5H973M967.5 218.1V229"/>
<!-- fit -->
<rect x="996.6" y="218.4" width="16.2" height="11.4" rx="2.2" stroke-width="1.3"/>
<!-- rotate -->
<path d="M1138.5 224.8A7.6 7.6 0 1 1 1149.6 230.7"/>
<circle cx="1146" cy="224" r="1.7" stroke-width="1"/>
<!-- page view -->
<path d="M1190.6 218.5H1194.6L1198.8 222.7V228.3Q1198.8 229.5 1197.6 229.5H1190.6Z"/>
<path d="M1194.6 218.5V222.7H1198.8"/>
<path d="M1188.6 218.5H1186Q1183.3 218.5 1183.3 221.2V226.8Q1183.3 229.5 1186 229.5H1188.6" stroke-dasharray="2.6 1.7" stroke-linecap="butt"/>
<!-- search -->
<circle cx="1409.5" cy="222.5" r="5.5"/>
<path d="M1413.5 226.5L1417.8 230.6"/>
<!-- printer -->
<path d="M1451 224.3H1450.2Q1448.2 224.3 1448.2 226V221.4Q1448.2 219.2 1450.4 219.2H1461.8Q1464 219.2 1464 221.4V226Q1464 228 1462.2 228H1461.2"/>
<path d="M1448.2 226Q1448.2 228 1450.2 228H1451"/>
<path d="M1451 219.2V218.4Q1451 217.1 1452.3 217.1H1459.9Q1461.2 217.1 1461.2 218.4V219.2"/>
<rect x="1451" y="224.3" width="10.2" height="6.4" rx="1.4"/>
<!-- save -->
<path d="M1487.2 217.1H1495.3Q1496.1 217.1 1496.7 217.7L1498.2 219.2Q1498.8 219.8 1498.8 220.6V228.7Q1498.8 230.7 1496.8 230.7H1487.2Q1485.2 230.7 1485.2 228.7V219.1Q1485.2 217.1 1487.2 217.1Z"/>
<path d="M1488.3 217.1V221.5H1494V217.1"/>
<path d="M1487.6 230.7V225.8Q1487.6 224.6 1488.8 224.6H1495.2Q1496.4 224.6 1496.4 225.8V230.7"/>
</g>
<g fill="#222">
<circle cx="588" cy="219.5" r=".95"/><circle cx="588" cy="223.5" r=".95"/><circle cx="592" cy="227.6" r=".95"/>
<circle cx="808.4" cy="223" r="1.15"/><circle cx="814.1" cy="223" r="1.15"/><circle cx="819.6" cy="223" r="1.15"/>
<circle cx="1522" cy="222.9" r="1.15"/><circle cx="1527.9" cy="222.9" r="1.15"/><circle cx="1533.7" cy="222.9" r="1.15"/>
<path d="M1000 224L1002.6 221.6V226.4ZM1009.6 224L1007 221.6V226.4Z"/>
<path d="M1147.6 231.9L1148.4 228.6L1152 231.6Z"/>
</g>
<path d="M705.2 228.5L706.9 231.6L708.6 228.5Z" fill="#777"/>
<path d="M699.9 216.2V219.9M714.1 216.2V219.9" stroke="#6a6a6a" stroke-width="1.7" fill="none"/>
<path d="M1002.6 224H1007" stroke="#999" stroke-width="1"/>
<rect x="927" y="223" width="10" height="1.8" fill="#8a8a8a"/>
<g fill="none" stroke="#555" stroke-width="1">
<path d="M660.3 222.3L664 225.7L667.7 222.3"/>
<path d="M729.4 222.4L733.1 226L736.8 222.4"/>
</g>
<text x="778" y="228.3" font-family="'Liberation Serif',serif" font-size="12" fill="#222" text-anchor="middle">T</text>
<!-- inner scrollbar arrows -->
<path d="M1553.2 218.8L1557.7 212.4L1562.2 218.8Z" fill="#8a8a8a"/>
<path d="M1553 708.2L1557.6 714.8L1562.2 708.2Z" fill="#8a8a8a"/>
</svg>


</div>
</div>
<div class="t" style="left:48.5px;top:16px;letter-spacing:0.077px;color:#fff;font-size:16.5px;font-family:'Liberation Sans',sans-serif;">View Documents</div>
<div class="t" style="left:61.6px;top:56px;letter-spacing:-0.333px;color:#1464a5;font-size:13.7px;font-family:'Liberation Sans',sans-serif;">Cookie-001</div>
<div class="t" style="left:136.8px;top:57px;letter-spacing:-0.25px;color:#262626;font-size:13.7px;font-family:'Liberation Sans',sans-serif;">(InProcess)</div>
<div class="t" style="left:213.0px;top:57px;letter-spacing:0.0px;color:#262626;font-size:13.7px;font-family:'Liberation Sans',sans-serif;font-style:italic;">/</div>
<div class="t" style="left:246.4px;top:56px;letter-spacing:-0.278px;color:#1464a5;font-size:13.7px;font-family:'Liberation Sans',sans-serif;">Belgas [A]</div>
<div class="t" style="left:314.3px;top:56px;letter-spacing:-0.3px;color:#262626;font-size:13.7px;font-family:'Liberation Sans',sans-serif;">(Belgas Cookies)</div>
<div class="t" style="left:423.2px;top:57px;letter-spacing:0.0px;color:#262626;font-size:13.7px;font-family:'Liberation Sans',sans-serif;font-style:italic;">/</div>
<div class="t" style="left:456.6px;top:56px;letter-spacing:0.1px;color:#1464a5;font-size:13.7px;font-family:'Liberation Sans',sans-serif;">Mixing</div>
<div class="t" style="left:510.0px;top:57px;letter-spacing:0.0px;color:#262626;font-size:13.7px;font-family:'Liberation Sans',sans-serif;font-style:italic;">/</div>
<div class="t" style="left:521.0px;top:56px;letter-spacing:-1.5px;color:#262626;font-size:13.7px;font-family:'Liberation Sans',sans-serif;">20</div>
<div class="t" style="left:540.6px;top:56px;letter-spacing:-1.0px;color:#262626;font-size:13.7px;font-family:'Liberation Sans',sans-serif;">Kg</div>
<div class="t" style="left:43.3px;top:115px;letter-spacing:-0.273px;color:#5b6b7a;font-size:12px;font-family:'Liberation Sans',sans-serif;">MATERIAL (1)</div>
<div class="t" style="left:138.8px;top:115px;letter-spacing:-0.3px;color:#5b6b7a;font-size:12px;font-family:'Liberation Sans',sans-serif;">PRODUCT (1)</div>
<div class="t" style="left:232.4px;top:115px;letter-spacing:-0.182px;color:#1464a5;font-size:12px;font-family:'Liberation Sans',sans-serif;">BOMITEMS (1)</div>
<div class="t" style="left:32.5px;top:163px;letter-spacing:0.107px;color:#222;font-size:15.5px;font-family:'Liberation Sans',sans-serif;">Attachments (1)</div>
<div class="t" style="left:1108.7px;top:118px;letter-spacing:0.286px;color:#555;font-size:13.4px;font-family:'Liberation Sans',sans-serif;">Product:</div>
<div class="t" style="left:1200.4px;top:118px;letter-spacing:-0.333px;color:#a9a9a9;font-size:13.4px;font-family:'Liberation Sans',sans-serif;font-style:italic;">Product</div>
<div class="t" style="left:1406.5px;top:118px;letter-spacing:-0.5px;color:#b3b3b3;font-size:13px;font-family:'Liberation Sans',sans-serif;font-style:italic;">Search</div>
<div class="t" style="left:40.4px;top:206px;letter-spacing:0.25px;color:#2a2a2a;font-size:13.4px;font-family:'Liberation Sans',sans-serif;">IndustrialWasteManagement.pdf</div>
<div class="t" style="left:40.4px;top:227px;letter-spacing:-0.045px;color:#2a2a2a;font-size:12.4px;font-family:'Liberation Sans',sans-serif;">PDF Document</div>
<div class="t" style="left:1509.9px;top:787px;letter-spacing:-0.25px;color:#1464a5;font-size:14.4px;font-family:'Liberation Sans',sans-serif;">Close</div>
<div class="t" style="left:1047.0px;top:218px;letter-spacing:0.0px;color:#444;font-size:12.4px;font-family:'Liberation Sans',sans-serif;">11</div>
<div class="t" style="left:1083.7px;top:218px;letter-spacing:-0.125px;color:#444;font-size:12.4px;font-family:'Liberation Sans',sans-serif;">of 17</div>

<svg class="a" style="left:0;top:0" width="1608" height="823" viewBox="0 0 1608 823">
<!-- header doc icon -->
<rect x="26" y="17" width="2" height="13.7" fill="#fff"/>
<rect x="28" y="17" width="1" height="13.7" fill="#fff" opacity=".72"/>
<rect x="29" y="17" width="9" height="13.7" fill="#fff"/>
<rect x="30" y="19.9" width="6.2" height="1.2" fill="#0079c9"/>
<rect x="30.9" y="22.9" width="5.1" height="1.2" fill="#0079c9"/>
<!-- help -->
<circle cx="1578.2" cy="22" r="7.5" fill="none" stroke="#fff" stroke-width="1.6"/>
<text x="1578.2" y="26.6" font-family="'Liberation Sans',sans-serif" font-weight="bold" font-size="12.5" fill="#fff" text-anchor="middle">?</text>
<!-- collapse chevron -->
<path d="M1576.3 61 L1584 66.6 L1591.7 61" fill="none" stroke="#1464a5" stroke-width="1.4"/>
<!-- breadcrumb icons -->
<rect x="43" y="55" width="14" height="14" fill="#1464a5"/>
<g fill="none" stroke="#3f69ad" stroke-width="1.1">
<rect x="226.5" y="60.2" width="16.6" height="4.2"/>
<path d="M230.65 56v8.4M234.8 56v12.6M238.95 60.2v8.4M230.65 56h4.15M234.8 68.6h4.15"/>
</g>
<circle cx="444.5" cy="62" r="7" fill="#1464a5"/>
<!-- product input icons -->
<g fill="none" stroke="#3f69ad" stroke-width="1.1">
<rect x="1176.5" y="122.6" width="17" height="4.4"/>
<path d="M1180.75 118.2v8.8M1185 118.2v13.2M1189.25 122.6v8.8M1180.75 118.2h4.25M1185 131.4h4.25" />
</g>
<g stroke="#7d7d7d" stroke-width="1">
<path d="M1306 118.5h16M1306 122.5h16M1306 126.6h16M1306 130.9h16"/>
</g>
<g fill="#3b3b3b">
<rect x="1308" y="117" width="2" height="3"/><rect x="1318" y="121" width="2" height="3"/><rect x="1310.4" y="125.1" width="2" height="3"/><rect x="1315.4" y="129.4" width="2" height="3"/>
</g>
<circle cx="1352.7" cy="121.9" r="5.5" fill="none" stroke="#1464a5" stroke-width="1.9"/>
<path d="M1348.6 126 L1343.6 130.6" stroke="#1464a5" stroke-width="2.8" stroke-linecap="round"/>
<circle cx="1391.6" cy="122" r="5.4" fill="none" stroke="#666" stroke-width="1.7"/>
<path d="M1387.6 126.2 L1383.2 130.7" stroke="#666" stroke-width="2.4" stroke-linecap="round"/>
<!-- action icons -->
<g fill="none" stroke="#1464a5">
<path d="M1396.1 162v11" stroke-width="2"/>
<path d="M1391.3 168.7 L1396.1 173.5 L1400.9 168.7" stroke-width="1.9"/>
<path d="M1388.5 176.5h15.1" stroke-width="2.6"/>
<path d="M1549 168v-5h5M1558.2 163h5v5M1563.2 171.9v5h-5M1554 176.9h-5v-5" stroke-width="2"/>
</g>
<g fill="none" stroke="#a9c6df">
<path d="M1434.7 163.9h-5.7v13.2h13.2v-5.7" stroke-width="1.4"/>
<path d="M1436.6 169.2 L1441.5 164.5" stroke-width="2.6"/>
<path d="M1476.1 163v14.8M1470.4 168.4 L1476.1 162.7 L1481.8 168.4" stroke-width="1.5"/>
<path d="M1516.2 162v15M1510.4 171.2 L1516.2 177 L1522 171.2" stroke-width="1.5"/>
</g>
<path d="M1438.3 162.2h5.7v5.7z" fill="#a9c6df"/>
</svg>

</body>
</html>
